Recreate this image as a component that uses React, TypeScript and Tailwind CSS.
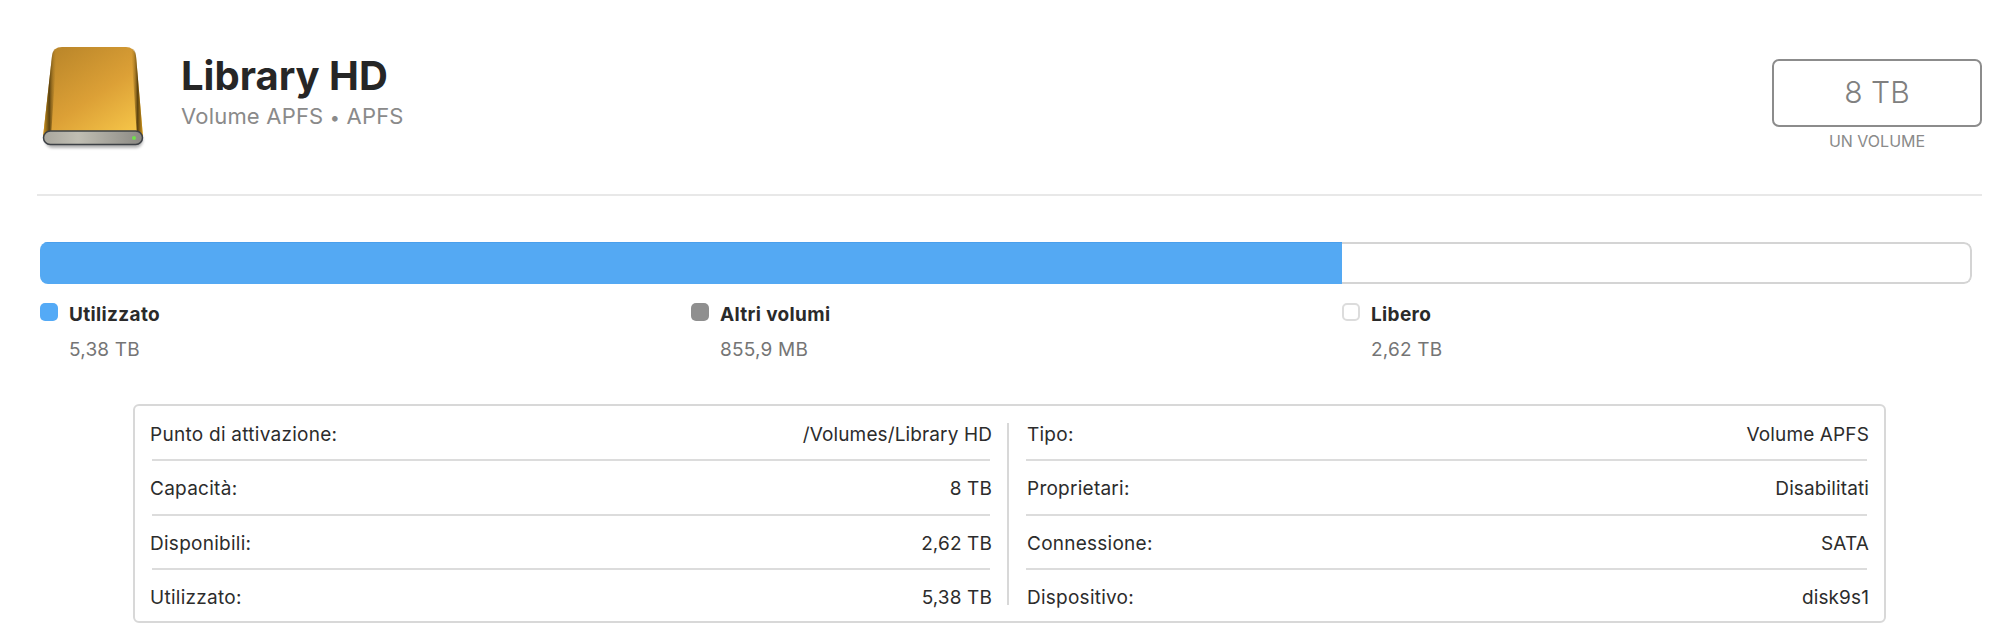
import React from "react";

const leftRows = [
  ["Punto di attivazione:", "/Volumes/Library HD"],
  ["Capacità:", "8 TB"],
  ["Disponibili:", "2,62 TB"],
  ["Utilizzato:", "5,38 TB"],
];

const rightRows = [
  ["Tipo:", "Volume APFS"],
  ["Proprietari:", "Disabilitati"],
  ["Connessione:", "SATA"],
  ["Dispositivo:", "disk9s1"],
];

const DriveIcon = () => (
  <svg width="108" height="110" viewBox="0 0 108 110" className="block shrink-0">
    <defs>
      <linearGradient id="body" x1="0.1" y1="0" x2="0.85" y2="1">
        <stop offset="0" stopColor="#b98529" />
        <stop offset="0.55" stopColor="#dca036" />
        <stop offset="1" stopColor="#f6c649" />
      </linearGradient>
      <linearGradient id="edgeL" x1="0" y1="0" x2="1" y2="0">
        <stop offset="0" stopColor="#d79a20" />
        <stop offset="0.45" stopColor="#5c430f" />
        <stop offset="1" stopColor="#c28d2c" stopOpacity="0" />
      </linearGradient>
      <linearGradient id="edgeR" x1="1" y1="0" x2="0" y2="0">
        <stop offset="0" stopColor="#d79a20" />
        <stop offset="0.45" stopColor="#5c430f" />
        <stop offset="1" stopColor="#c28d2c" stopOpacity="0" />
      </linearGradient>
      <linearGradient id="face" x1="0" y1="0" x2="1" y2="0">
        <stop offset="0" stopColor="#a9a79e" />
        <stop offset="0.35" stopColor="#c0beb3" />
        <stop offset="1" stopColor="#8b8983" />
      </linearGradient>
      <filter id="soft" x="-10%" y="-30%" width="120%" height="180%">
        <feGaussianBlur stdDeviation="1.5" />
      </filter>
    </defs>
    <rect x="5" y="89" width="98" height="15" rx="7.5" fill="#000" opacity="0.3" filter="url(#soft)" />
    <path d="M12 12 Q13 3 22 3 H86 Q94 3 96 12 L103 93 H3 Z" fill="url(#body)" />
    <path d="M12 12 Q12.5 5 17 4 L11 93 H3 Z" fill="url(#edgeL)" />
    <path d="M96 12 Q95.5 5 91 4 L97 93 H103 Z" fill="url(#edgeR)" />
    <rect x="3.5" y="87" width="99" height="13.5" rx="6.75" fill="url(#face)" stroke="#3d4146" strokeWidth="1.5" />
    <circle cx="94" cy="94" r="2" fill="#6fe04a" />
  </svg>
);

const InfoRow = ({
  label,
  value,
  last,
  labelClass,
}: {
  label: string;
  value: string;
  last: boolean;
  labelClass: string;
}) => (
  <div
    className={
      last
        ? "flex justify-between h-[50px] pt-[16px]"
        : "flex justify-between h-[54.33px] pt-[16px] border-b-2 border-[#dcdcdc]"
    }
  >
    <span className={labelClass}>{label}</span>
    <span className="-mr-[2px] text-[19px] leading-[24px] tracking-[0.12px] text-[#2c2c2c]">{value}</span>
  </div>
);

const Legend = ({ swatch, label, value }: { swatch: string; label: string; value: string }) => (
  <div className="flex">
    <div className={swatch} />
    <div className="ml-[11px] mt-[1px]">
      <div className="text-[19px] leading-[24px] font-bold tracking-[0.35px] text-[#2a2a2a]">{label}</div>
      <div className="mt-[11px] text-[19px] leading-[24px] tracking-[0.2px] text-[#757575]">{value}</div>
    </div>
  </div>
);

export default function App() {
  return (
    <div className="w-[2000px] h-[644px] overflow-hidden bg-white font-['Inter',sans-serif]">
      <div className="flex h-[194px] pl-[40px] pr-[18px] pt-[44px]">
        <DriveIcon />
        <div className="ml-[33px] mt-[8px]">
          <h1 className="text-[40px] leading-[48px] font-bold text-[#262626]">Library HD</h1>
          <p className="mt-[2px] text-[22px] leading-[28px] tracking-[0.2px] text-[#8a8a8a]">
            Volume APFS <span className="text-[18px]">•</span> APFS
          </p>
        </div>
        <div className="ml-auto w-[210px] mt-[15px]">
          <div className="flex h-[68px] items-center justify-center rounded-[7px] border-2 border-[#8c8c8c] pb-[2px] text-[30px] font-light text-[#808080]">
            8 TB
          </div>
          <div className="mt-[4px] text-center text-[16px] leading-[20px] text-[#8a8a8a]">UN VOLUME</div>
        </div>
      </div>

      <div className="ml-[37px] mr-[18px] h-[2px] bg-[#e8e8e8]" />

      <div className="ml-[40px] mr-[28px] mt-[46px] flex h-[42px] overflow-hidden rounded-[8px]">
        <div className="w-[1302px] border-t border-[#4a9fec] bg-[#54a9f3]" />
        <div className="flex-1 rounded-r-[8px] border-2 border-l-0 border-[#d4d4d4]" />
      </div>

      <div className="ml-[40px] mt-[18px] grid grid-cols-[651px_651px_1fr]">
        <Legend swatch="mt-[1px] h-[18px] w-[18px] rounded-[5px] bg-[#54aaf6]" label="Utilizzato" value="5,38 TB" />
        <Legend swatch="mt-[1px] h-[18px] w-[18px] rounded-[5px] bg-[#8f8f8f]" label="Altri volumi" value="855,9 MB" />
        <Legend swatch="mt-[1px] h-[18px] w-[18px] rounded-[5px] border-2 border-[#dcdcdc]" label="Libero" value="2,62 TB" />
      </div>

      <div className="ml-[133px] mr-[114px] mt-[42px] flex h-[219px] rounded-[6px] border-2 border-[#d8d8d8]">
        <div className="ml-[17px] w-[838px] pt-[1px]">
          {leftRows.map((r, i) => (
            <InfoRow
              key={r[0]}
              label={r[0]}
              value={r[1]}
              last={i === 3}
              labelClass="-ml-[2px] text-[19px] leading-[24px] tracking-[0.27px] text-[#2c2c2c]"
            />
          ))}
        </div>
        <div className="ml-[17px] mt-[17px] h-[182px] w-[2px] bg-[#d8d8d8]" />
        <div className="ml-[17px] w-[841px] pt-[1px]">
          {rightRows.map((r, i) => (
            <InfoRow
              key={r[0]}
              label={r[0]}
              value={r[1]}
              last={i === 3}
              labelClass="ml-[1px] text-[19px] leading-[24px] tracking-[0.25px] text-[#2c2c2c]"
            />
          ))}
        </div>
      </div>
    </div>
  );
}
